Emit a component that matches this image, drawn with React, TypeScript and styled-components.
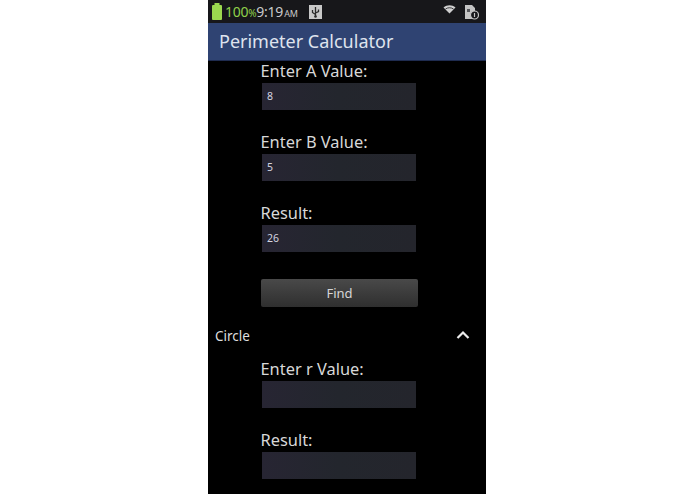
import React from "react";
import styled, { createGlobalStyle } from "styled-components";

const Global = createGlobalStyle`
  html, body { margin: 0; padding: 0; background: #fff; height: 100%; overflow: hidden; }
  #root { height: 100%; }
`;

const Page = styled.div`
  display: flex;
  justify-content: center;
  height: 494px;
  padding-right: 1px;
  box-sizing: border-box;
  font-family: "Noto Sans", sans-serif;
`;

const Phone = styled.div`
  width: 278px;
  height: 494px;
  background: #000;
  display: flex;
  flex-direction: column;
  overflow: hidden;
`;

const StatusBar = styled.div`
  height: 23px;
  flex: none;
  background: #17171a;
  display: flex;
  align-items: center;
  padding: 0 7px 0 3px;
  color: #c9c9c9;
`;

const Battery = styled.svg`
  width: 12px;
  height: 17px;
  flex: none;
`;

const Percent = styled.span`
  color: #8fd04a;
  font-size: 14px;
  margin-left: 2px;
  letter-spacing: -0.3px;
`;

const PercentSign = styled.span`
  font-size: 10px;
`;

const Clock = styled.span`
  font-size: 14px;
  letter-spacing: -0.2px;
`;

const Meridiem = styled.span`
  font-size: 9px;
  margin-left: 1px;
`;

const UsbBadge = styled.svg`
  width: 13px;
  height: 14px;
  margin-left: 11px;
`;

const Spacer = styled.div`
  flex: 1;
`;

const WifiIcon = styled.svg`
  width: 13px;
  height: 10px;
  margin: 0 8px 6px 0;
`;

const SimIcon = styled.svg`
  width: 15px;
  height: 16px;
`;

const AppBar = styled.header`
  height: 38px;
  flex: none;
  background: #2f4372;
  color: #dfe3ee;
  font-size: 18px;
  line-height: 37px;
  padding-left: 11px;
  box-sizing: border-box;
  border-bottom: 1px solid #1f2c50;
`;

const Content = styled.main`
  display: flex;
  flex-direction: column;
  flex: 1;
`;

const Field = styled.section`
  display: flex;
  flex-direction: column;
  align-items: flex-start;
  padding-left: 53px;
  height: 71px;
`;

const FieldLabel = styled.label`
  font-size: 16.4px;
  line-height: 20px;
  height: 22px;
  color: #d8d8d8;
  margin-left: -0.5px;
`;

const ValueBox = styled.div`
  width: 154px;
  height: 27px;
  margin-left: 1px;
  background: linear-gradient(90deg, #272533, #23262d 50%, #24252c);
  color: #d4d4e0;
  font-size: 10.5px;
  line-height: 27px;
  padding-left: 5px;
  box-sizing: border-box;
`;

const FindButton = styled.button`
  width: 157px;
  height: 28px;
  margin: 0 0 0 53px;
  padding: 0;
  border: none;
  border-radius: 2px;
  background: linear-gradient(#494949, #2f2f2f);
  color: #d6d6d6;
  font-family: inherit;
  font-size: 13px;
`;

const AccordionHeader = styled.div`
  display: flex;
  align-items: center;
  justify-content: space-between;
  height: 29px;
  margin-top: 14px;
  padding: 0 16px 0 7px;
  color: #dedede;
  font-size: 13.5px;
`;

const Chevron = styled.svg`
  width: 14px;
  height: 10px;
  margin-bottom: 2px;
`;

const FirstFields = styled.div`
  height: 218px;
`;

const CircleFields = styled.div`
  margin-top: 9px;
`;

const App = () => (
  <Page>
    <Global />
    <Phone>
      <StatusBar>
        <Battery viewBox="0 0 12 17">
          <rect x="3.500" y="0" width="5" height="2" fill="#9bd84f" />
          <rect x="1" y="2" width="10" height="15" rx="1" fill="#9bd84f" />
        </Battery>
        <Percent>
          100<PercentSign>%</PercentSign>
        </Percent>
        <Clock>
          9:19<Meridiem>AM</Meridiem>
        </Clock>
        <UsbBadge viewBox="0 0 13 14">
          <rect width="13" height="14" fill="#c8c8c8" />
          <path d="M6.500 2v10M3.500 5v2.500l3 2M9.500 4.500v2l-3 1.500" stroke="#2a2a2a" strokeWidth="1.300" fill="none" />
          <circle cx="6.500" cy="11.500" r="1.300" fill="#2a2a2a" />
        </UsbBadge>
        <Spacer />
        <WifiIcon viewBox="0 0 13 10">
          <path d="M0.500 3.500C4 0.500 9 0.500 12.500 3.500L6.500 9.500Z" fill="#cfcfcf" />
          <path d="M2.500 5C5 3.300 8 3.300 10.500 5" stroke="#17171a" strokeWidth="0.800" fill="none" />
        </WifiIcon>
        <SimIcon viewBox="0 0 15 16">
          <path d="M1 1h7l3 3v4H8v7H1Z" fill="#c4c4c4" />
          <path d="M3 5h3v3H3z" fill="#55565a" />
          <circle cx="10.500" cy="11" r="4" fill="#17171a" stroke="#c4c4c4" strokeWidth="1.200" />
          <path d="M10.500 9v4" stroke="#c4c4c4" strokeWidth="1.200" />
        </SimIcon>
      </StatusBar>
      <AppBar>Perimeter Calculator</AppBar>
      <Content>
        <FirstFields>
          <Field>
            <FieldLabel>Enter A Value:</FieldLabel>
            <ValueBox>8</ValueBox>
          </Field>
          <Field>
            <FieldLabel>Enter B Value:</FieldLabel>
            <ValueBox>5</ValueBox>
          </Field>
          <Field>
            <FieldLabel>Result:</FieldLabel>
            <ValueBox>26</ValueBox>
          </Field>
        </FirstFields>
        <FindButton>Find</FindButton>
        <AccordionHeader>
          <span>Circle</span>
          <Chevron viewBox="0 0 14 10">
            <path d="M1.500 8L7 2.500L12.500 8" stroke="#ececec" strokeWidth="2.200" fill="none" />
          </Chevron>
        </AccordionHeader>
        <CircleFields>
          <Field>
            <FieldLabel>Enter r Value:</FieldLabel>
            <ValueBox />
          </Field>
          <Field>
            <FieldLabel>Result:</FieldLabel>
            <ValueBox />
          </Field>
        </CircleFields>
      </Content>
    </Phone>
  </Page>
);

export default App;
